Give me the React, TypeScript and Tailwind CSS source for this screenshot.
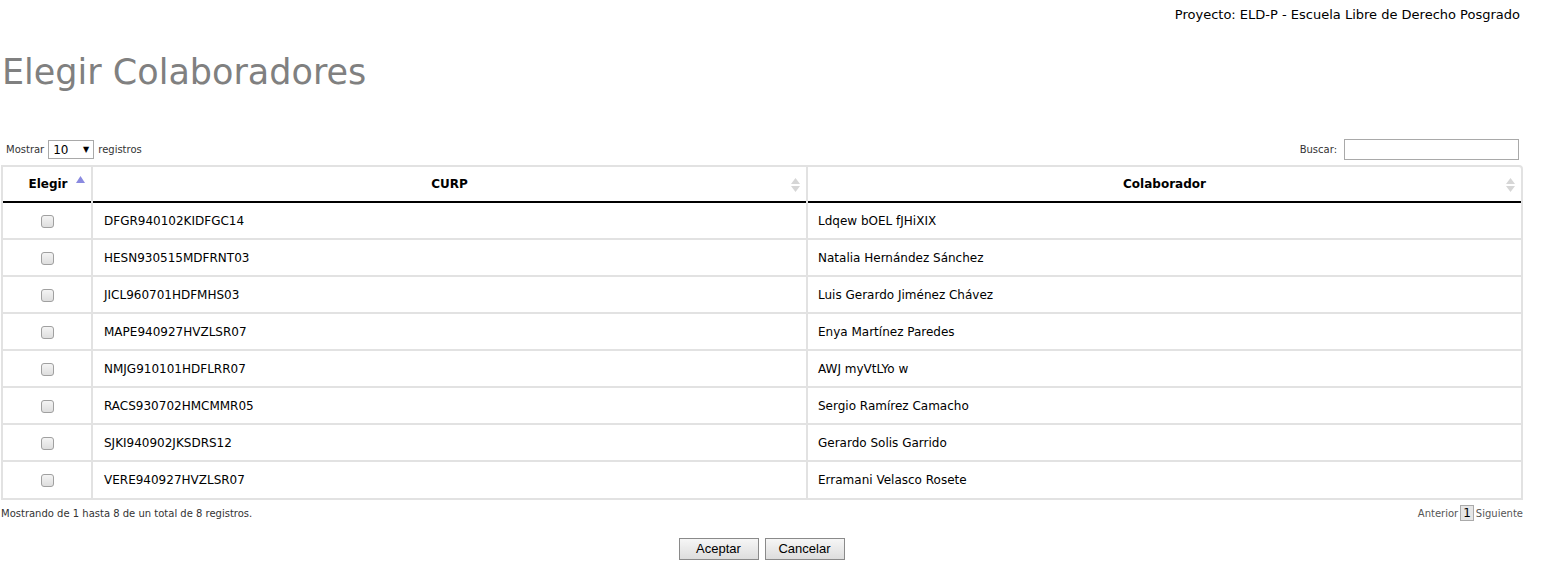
import React from "react";

const rows = [
  ["DFGR940102KIDFGC14", "Ldqew bOEL fJHiXIX"],
  ["HESN930515MDFRNT03", "Natalia Hernández Sánchez"],
  ["JICL960701HDFMHS03", "Luis Gerardo Jiménez Chávez"],
  ["MAPE940927HVZLSR07", "Enya Martínez Paredes"],
  ["NMJG910101HDFLRR07", "AWJ myVtLYo w"],
  ["RACS930702HMCMMR05", "Sergio Ramírez Camacho"],
  ["SJKI940902JKSDRS12", "Gerardo Solis Garrido"],
  ["VERE940927HVZLSR07", "Erramani Velasco Rosete"],
];

function SortBoth() {
  return (
    <svg width="9" height="14" viewBox="0 0 9 14" className="absolute right-[6px] top-[11px]">
      <path d="M4.5 0 L9 6 L0 6 Z" fill="#d6d6d6" />
      <path d="M4.5 14 L9 8 L0 8 Z" fill="#d6d6d6" />
    </svg>
  );
}

function SortAsc() {
  return (
    <svg width="9" height="7" viewBox="0 0 9 7" className="absolute right-[6px] top-[9px]">
      <path d="M4.5 0 L9 7 L0 7 Z" fill="#8a8ae0" />
    </svg>
  );
}

function Checkbox() {
  return (
    <span className="inline-block w-[13px] h-[13px] rounded-[3px] border border-[#a0a0a0] bg-gradient-to-b from-[#f4f4f4] to-[#dedede] align-middle" />
  );
}

export default function App() {
  return (
    <div className="min-h-screen bg-white text-black font-['Verdana','DejaVu_Sans',sans-serif]">
      <div className="flex justify-end pr-[23px] pt-[7px] text-[13px] leading-[16px]">
        Proyecto: ELD-P - Escuela Libre de Derecho Posgrado
      </div>

      <h1 className="pl-[2px] mt-[29px] text-[35px] leading-[40px] text-[#808080]">
        Elegir Colaboradores
      </h1>

      <div className="mt-[47px] w-[1523px] flex items-center justify-between text-[10px] text-[#333]">
        <div className="flex items-center pl-[6px] gap-[4px]">
          <span>Mostrar</span>
          <span className="flex items-center justify-between w-[46px] h-[19px] border border-[#a9a9a9] bg-white px-[4px] text-[12px] text-black">
            <span>10</span>
            <span className="text-[8px]">▼</span>
          </span>
          <span>registros</span>
        </div>
        <div className="flex items-center gap-[7px] pr-[4px]">
          <span>Buscar:</span>
          <span className="w-[175px] h-[21px] border border-[#a9a9a9] bg-white" />
        </div>
      </div>

      <div className="mt-[5px] ml-[1px] w-[1522px] border-2 border-[#e2e2e2] rounded-tr-[4px]">
        <table className="w-full border-collapse text-[12px] table-fixed">
          <colgroup>
            <col className="w-[89px]" />
            <col className="w-[715px]" />
            <col />
          </colgroup>
          <thead>
            <tr className="h-[35px] border-b-2 border-black">
              <th className="relative font-bold text-center pl-[2px] border-r-2 border-[#e2e2e2]">
                Elegir
                <SortAsc />
              </th>
              <th className="relative font-bold text-center border-r-2 border-[#e2e2e2]">
                CURP
                <SortBoth />
              </th>
              <th className="relative font-bold text-center">
                Colaborador
                <SortBoth />
              </th>
            </tr>
          </thead>
          <tbody>
            {rows.map(([curp, name], i) => (
              <tr key={curp} className={`h-[37px] ${i < rows.length - 1 ? "border-b-2 border-[#e2e2e2]" : ""}`}>
                <td className="text-center border-r-2 border-[#e2e2e2]">
                  <Checkbox />
                </td>
                <td className="pl-[11px] border-r-2 border-[#e2e2e2]">{curp}</td>
                <td className="pl-[10px]">{name}</td>
              </tr>
            ))}
          </tbody>
        </table>
      </div>

      <div className="w-[1523px] flex items-center justify-between mt-[5px] text-[10px] text-[#333]">
        <span className="pl-[1px]">Mostrando de 1 hasta 8 de un total de 8 registros.</span>
        <span className="flex items-center gap-[2px] text-[#555]">
          Anterior
          <span className="inline-block px-[2px] border border-[#aaa] bg-[#e6e6e6] text-[12px] leading-[14px] text-black">1</span>
          Siguiente
        </span>
      </div>

      <div className="flex justify-center gap-[6px] mt-[17px] pr-[20px] font-['Liberation_Sans',Arial,sans-serif] text-[13px]">
        <button className="w-[80px] h-[22px] border border-[#8a8a8a] bg-gradient-to-b from-[#f6f6f6] to-[#dddddd]">
          Aceptar
        </button>
        <button className="w-[80px] h-[22px] border border-[#8a8a8a] bg-gradient-to-b from-[#f6f6f6] to-[#dddddd]">
          Cancelar
        </button>
      </div>
    </div>
  );
}
